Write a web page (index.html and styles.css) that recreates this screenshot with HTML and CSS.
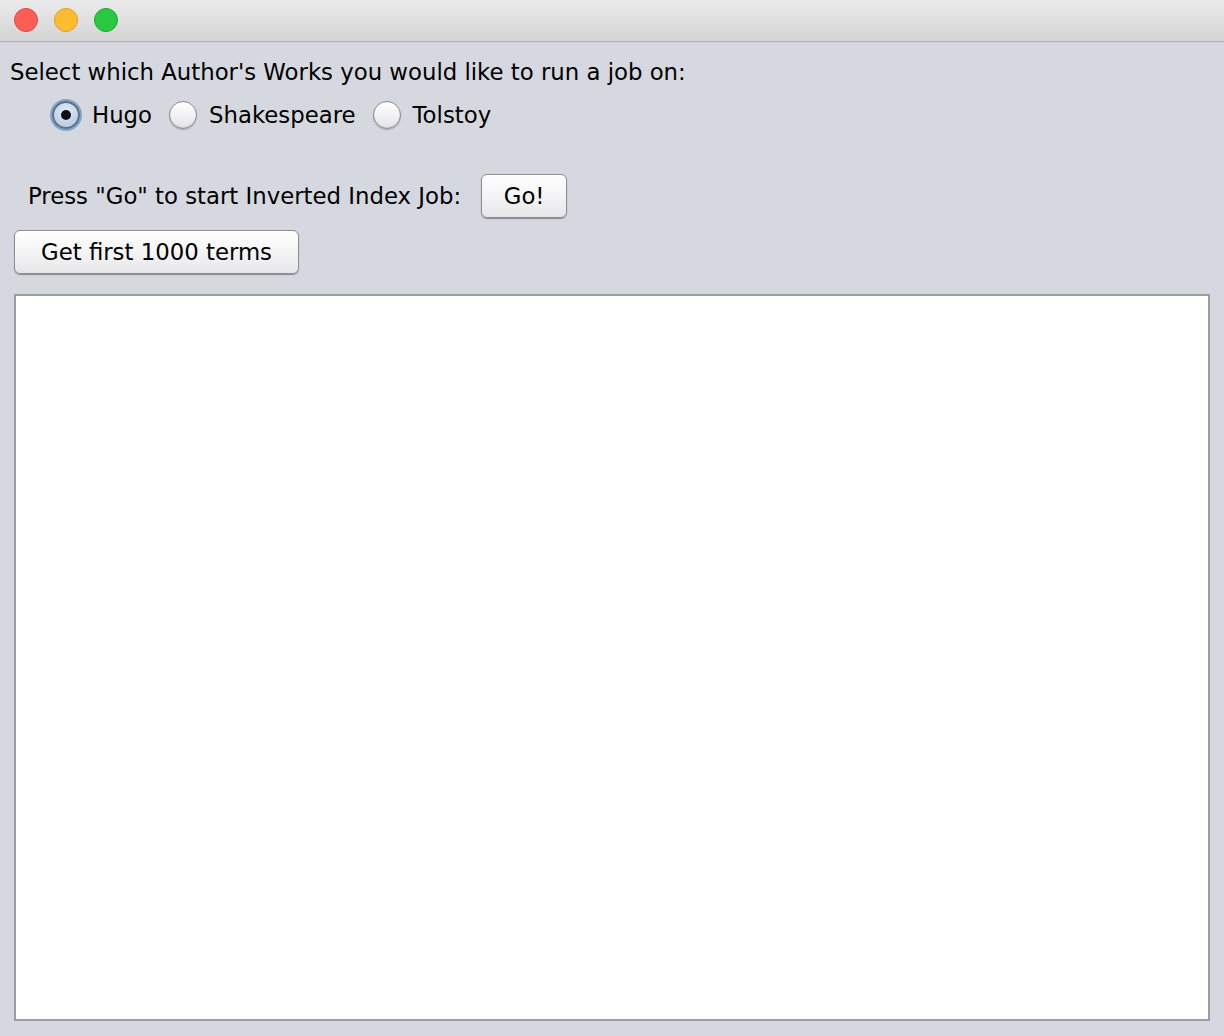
FILE: index.html
```html
<!DOCTYPE html>
<html>
<head>
<meta charset="utf-8">
<link rel="stylesheet" href="styles.css">
</head>
<body>
<div class="window">
  <div class="titlebar">
    <span class="light red"></span>
    <span class="light yellow"></span>
    <span class="light green"></span>
  </div>
  <div class="content">
    <div class="prompt">Select which Author's Works you would like to run a job on:</div>
    <div class="radios">
      <label class="radio"><span class="dot checked"><span class="inner"></span></span>Hugo</label>
      <label class="radio"><span class="dot"></span>Shakespeare</label>
      <label class="radio"><span class="dot"></span>Tolstoy</label>
    </div>
    <div class="gorow">
      <span class="golabel">Press "Go" to start Inverted Index Job:</span>
      <button class="btn gobtn">Go!</button>
    </div>
    <div class="termsrow">
      <button class="btn termsbtn">Get first 1000 terms</button>
    </div>
    <div class="textarea"></div>
  </div>
</div>
</body>
</html>
```
FILE: styles.css
```css
html, body {
  margin: 0;
  padding: 0;
  width: 1224px;
  height: 1036px;
  overflow: hidden;
  background: #d6d8df;
  font-family: "DejaVu Sans", "Liberation Sans", sans-serif;
  color: #000;
}
.window {
  width: 1224px;
  height: 1036px;
  display: flex;
  flex-direction: column;
}
.titlebar {
  height: 41px;
  border-bottom: 1px solid #b1b1b1;
  background: linear-gradient(#ebebeb, #d4d4d4);
  display: flex;
  align-items: center;
  padding-left: 14px;
  gap: 16px;
  box-sizing: content-box;
}
.light {
  width: 24px;
  height: 24px;
  border-radius: 50%;
  box-sizing: border-box;
  margin-top: -1px;
}
.red { background: #fd5f57; border: 1px solid #e0443e; }
.yellow { background: #febc2e; border: 1px solid #dea123; }
.green { background: #29c840; border: 1px solid #1aab29; }
.content {
  flex: 1;
  display: flex;
  flex-direction: column;
  padding: 0 14px 15px 14px;
}
.prompt {
  font-size: 22.8px;
  margin-left: -4px;
  margin-top: 14px;
  height: 32px;
  line-height: 32px;
}
.radios {
  display: flex;
  align-items: center;
  margin-left: 38px;
  margin-top: 10px;
  height: 34px;
  font-size: 22.8px;
}
.radio {
  display: flex;
  align-items: center;
  margin-right: 17px;
}
.dot {
  width: 28px;
  height: 28px;
  border-radius: 50%;
  box-sizing: border-box;
  border: 1px solid #8a8a8e;
  background: linear-gradient(#ffffff, #e4e4e8);
  margin-right: 12px;
  display: flex;
  align-items: center;
  justify-content: center;
  box-shadow: inset 0 -1px 1px rgba(0,0,0,0.08), 0 1px 1px rgba(0,0,0,0.2);
}
.dot.checked {
  border: 2px solid #5d6f86;
  background: radial-gradient(circle at 50% 35%, #e6eef8, #a9c1dc);
  box-shadow: 0 0 0 2px #7fa3cc;
}
.inner {
  width: 10px;
  height: 10px;
  border-radius: 50%;
  background: #111;
}
.gorow {
  display: flex;
  align-items: center;
  margin-top: 41px;
  margin-left: 14px;
  height: 46px;
}
.golabel {
  font-size: 22.8px;
  margin-right: 20px;
}
.btn {
  font-family: inherit;
  font-size: 22.8px;
  color: #000;
  border: 1px solid #8d8d90;
  border-radius: 6px;
  background: linear-gradient(#ffffff, #f2f2f4 60%, #e6e6ea);
  box-shadow: 0 1px 1px rgba(0,0,0,0.35);
  height: 44px;
  padding: 0;
  box-sizing: border-box;
}
.gobtn { width: 86px; }
.termsrow {
  margin-top: 10px;
  height: 46px;
  display: flex;
  align-items: center;
}
.termsbtn { width: 285px; }
.textarea {
  margin-top: 19px;
  flex: 1;
  background: #fff;
  border: 2px solid #9a9ca6;
  margin-right: 0;
}
```
